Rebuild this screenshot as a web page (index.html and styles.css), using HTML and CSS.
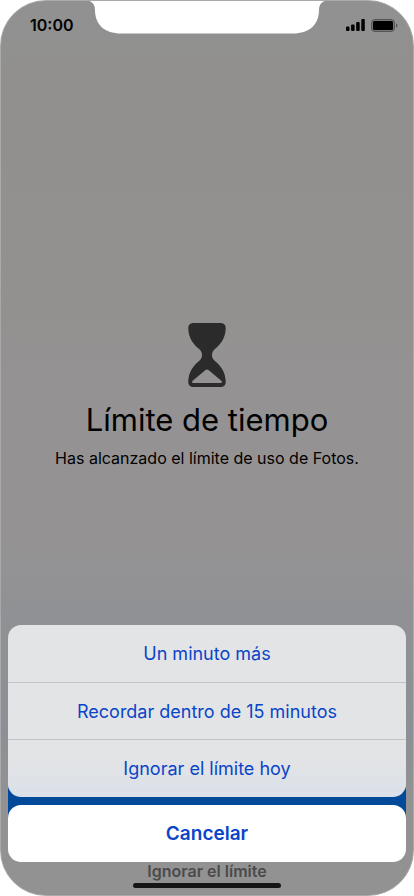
FILE: index.html
```html
<!DOCTYPE html>
<html lang="es">
<head>
<meta charset="utf-8">
<meta name="viewport" content="width=device-width, initial-scale=1">
<title>Límite de tiempo</title>
<link rel="stylesheet" href="styles.css">
</head>
<body>
<div class="screen">
  <svg class="notch" viewBox="0 0 242 34" aria-hidden="true">
    <path d="M0 0H242C236 1 233 4 233 10C233 25 223 33.500 207 33.500H35C19 33.500 9 25 9 10C9 4 6 1 0 0Z"/>
  </svg>
  <header class="status">
    <time class="clock">10:00</time>
    <div class="indicators">
      <svg class="signal" width="19" height="12" viewBox="0 0 19 12" aria-hidden="true">
        <rect x="0" y="7.500" width="3.500" height="4.500" rx="1"/>
        <rect x="5.100" y="5.500" width="3.500" height="6.500" rx="1"/>
        <rect x="10.200" y="3" width="3.500" height="9" rx="1"/>
        <rect x="15.300" y="0" width="3.500" height="12" rx="1"/>
      </svg>
      <svg class="battery" width="27" height="13" viewBox="0 0 27 13" aria-hidden="true">
        <rect class="shell" x="0.5" y="0.5" width="23" height="12" rx="3.5"/>
        <rect x="2" y="2" width="20" height="9" rx="1.5"/>
        <path class="cap" d="M25 4.5C27 5 27 8 25 8.5Z"/>
      </svg>
    </div>
  </header>

  <main class="message">
    <svg class="hourglass" width="38" height="66" viewBox="0 0 38 66" aria-hidden="true">
      <path fill-rule="evenodd" d="M6 1H32C36 1 38 3 37.700 7C37.200 15 34 21 27.500 26.500C25 28.600 24 30.500 24 33C24 35.500 25 37.500 27.500 39.500C34 45 37.200 51 37.700 59C38 63 36 65 32 65H6C2 65 0 63 0.300 59C0.800 51 4 45 10.500 39.500C13 37.500 14 35.500 14 33C14 30.500 13 28.600 10.500 26.500C4 21 0.800 15 0.300 7C0 3 2 1 6 1ZM17.500 48L4.700 58.700C3.300 60 4 61 5.500 61H32.500C34 61 34.700 60 33.300 58.700L20.500 48Q19 46.800 17.500 48Z"/>
    </svg>
    <h1 class="title">Límite de tiempo</h1>
    <p class="detail">Has alcanzado el límite de uso de Fotos.</p>
  </main>

  <footer class="footer">
    <div class="primary"></div>
    <a class="ignore" href="#">Ignorar el límite</a>
    <div class="home"></div>
  </footer>

  <div class="sheet" role="dialog" aria-modal="true">
    <div class="options">
      <button class="option" type="button">Un minuto más</button>
      <button class="option" type="button">Recordar dentro de 15 minutos</button>
      <button class="option" type="button">Ignorar el límite hoy</button>
    </div>
    <button class="cancel" type="button">Cancelar</button>
  </div>
</div>
</body>
</html>
```
FILE: styles.css
```css
* { box-sizing: border-box; }

body {
  margin: 0;
  background: #fff;
  color: #000;
  font-family: Inter, "Liberation Sans", sans-serif;
}

.screen {
  position: relative;
  display: flex;
  flex-direction: column;
  min-height: 100vh;
  overflow: hidden;
  border: 1px solid #a9a9a9;
  border-radius: 46px;
  background: linear-gradient(#919191 0%, #91908e 12%, #92918f 30%, #949292 42%, #959293 56%, #939294 64%, #8f9195 70%, #8c9096 82%, #929292 90%, #929292 100%);
}

.notch {
  position: absolute;
  top: -1px;
  left: 50%;
  width: 242px;
  height: 34px;
  transform: translateX(-50%);
  fill: #fff;
}

.status {
  display: flex;
  justify-content: space-between;
  align-items: center;
  height: 48px;
  padding: 0 15px 0 29px;
}

.clock {
  font-size: 16px;
  font-weight: 600;
}

.indicators {
  display: flex;
  align-items: center;
  gap: 6px;
}

.shell {
  fill: #777;
  stroke: #555;
}

.cap { fill: #555; }

.message {
  flex: 1;
  display: flex;
  flex-direction: column;
  align-items: center;
  justify-content: center;
  padding: 0 16px 38px;
  text-align: center;
}

.hourglass { fill: #2b2b2b; }

.title {
  margin: 12px 0 0;
  font-size: 31px;
  font-weight: 400;
  line-height: 40px;
}

.detail {
  margin: 8px 0 0;
  font-size: 16px;
  line-height: 20px;
}

.footer {
  display: flex;
  flex-direction: column;
  align-items: center;
  padding: 0 7px 7px;
}

.primary {
  align-self: stretch;
  height: 50px;
  border-radius: 12px;
  background: #004a99;
}

.ignore {
  margin-top: 32px;
  color: #4b4b4b;
  font-size: 16px;
  font-weight: 600;
  line-height: 20px;
  text-decoration: none;
}

.home {
  width: 148px;
  height: 5px;
  margin-top: 2px;
  border-radius: 3px;
  background: #161616;
}

.sheet {
  position: absolute;
  right: 7px;
  bottom: 33px;
  left: 7px;
  display: flex;
  flex-direction: column;
  gap: 8px;
}

.options {
  display: flex;
  flex-direction: column;
  overflow: hidden;
  padding-bottom: 1px;
  border-radius: 13px;
  background: linear-gradient(#e3e4e6 0%, #e3e4e6 78%, #dae0e9 100%);
}

.option,
.cancel {
  height: 57px;
  padding: 0 16px;
  border: 0;
  background: none;
  color: #0a44c8;
  font: inherit;
  font-size: 18px;
}

.option + .option {
  border-top: 1px solid #c3c4c7;
}

.cancel {
  border-radius: 13px;
  background: #fff;
  font-size: 19px;
  font-weight: 600;
}
```
